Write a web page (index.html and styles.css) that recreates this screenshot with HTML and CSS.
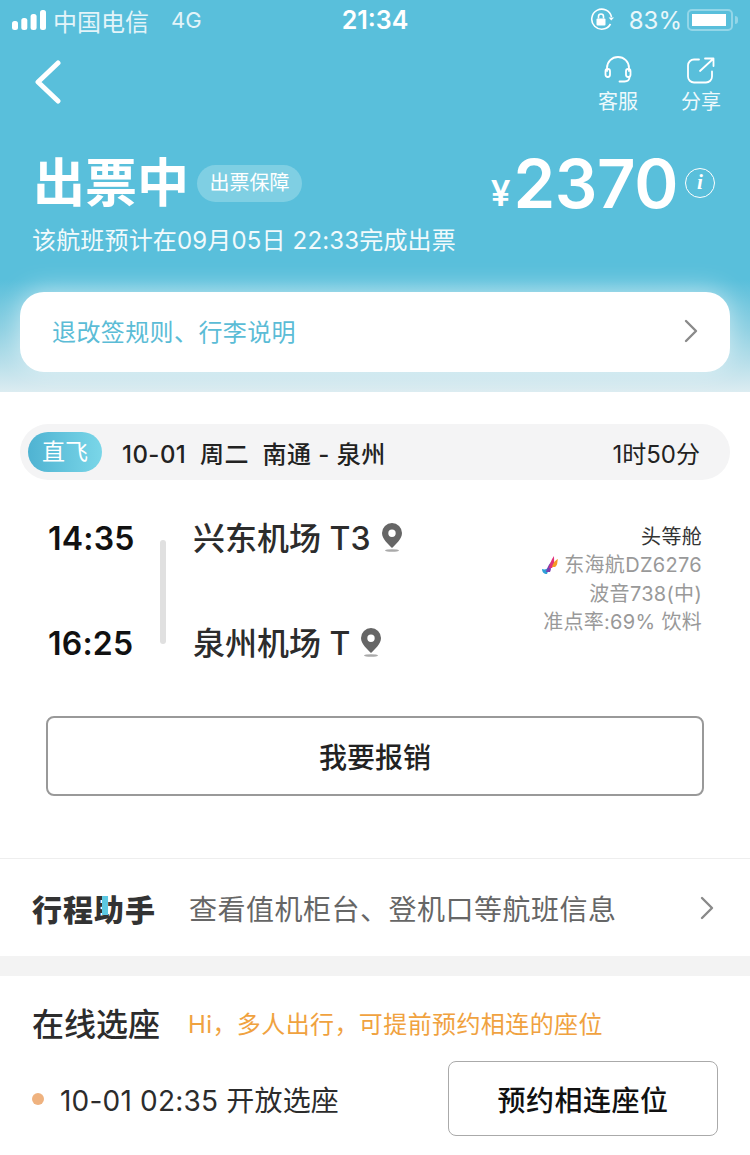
FILE: index.html
```html
<!DOCTYPE html>
<html lang="zh">
<head>
<meta charset="utf-8">
<title>出票中</title>
<link rel="stylesheet" href="styles.css">
</head>
<body>
<div class="page">
  <header class="hero">
    <div class="status">
      <div class="status-side">
        <svg class="signal" width="34" height="20" viewBox="0 0 34 20"><rect x="0" y="11" width="6" height="9" rx="2.5"/><rect x="9.300" y="8" width="6" height="12" rx="2.500"/><rect x="18.600" y="4" width="6" height="16" rx="2.500"/><rect x="28" y="0" width="6" height="20" rx="2.500"/></svg>
        <span class="carrier">中国电信</span><span class="net">4G</span>
      </div>
      <div class="clock">21:34</div>
      <div class="status-side status-right">
        <svg width="24" height="24" viewBox="0 0 24 24" fill="none" stroke="#fff" stroke-width="1.600"><path d="M20.500 16A10 10 0 1 1 21.500 9"/><path d="M18.600 9.400h5.400l-2.700 3z" fill="#fff" stroke="none"/><rect x="6.500" y="10.500" width="9" height="7" rx="1" fill="#fff" stroke="none"/><path d="M8.500 10.500V8.500a2.500 2.500 0 0 1 5 0v2"/></svg>
        <span class="pct">83%</span>
        <div class="battery"><div class="battery-fill"></div></div>
        <div class="battery-tip"></div>
      </div>
    </div>
    <div class="nav">
      <svg class="back" width="28" height="44" viewBox="0 0 28 44" fill="none" stroke="#fff" stroke-width="5" stroke-linecap="round" stroke-linejoin="round"><path d="M24 3 4 22l20 19"/></svg>
      <div class="actions">
        <div class="action">
          <svg width="30" height="30" viewBox="0 0 30 30" fill="none" stroke="#fff" stroke-width="1.800" stroke-linecap="round"><path d="M4 15v-3a11 11 0 0 1 22 0v3"/><rect x="2.500" y="13" width="4.500" height="8" rx="2.200"/><rect x="23" y="13" width="4.500" height="8" rx="2.200"/><path d="M26.500 21c0 3-2 4.500-5 4.500h-5"/></svg>
          <span>客服</span>
        </div>
        <div class="action">
          <svg width="30" height="30" viewBox="0 0 30 30" fill="none" stroke="#fff" stroke-width="1.800" stroke-linecap="round" stroke-linejoin="round"><path d="M13 3.500H8A6 6 0 0 0 2 9.500v11a6 6 0 0 0 6 6h12a6 6 0 0 0 6-6v-5"/><path d="M14 15 27 3M19 2.500h8.500V10"/></svg>
          <span>分享</span>
        </div>
      </div>
    </div>
    <div class="summary">
      <div class="summary-left">
        <div class="title-row"><h1>出票中</h1><span class="guarantee">出票保障</span></div>
        <p class="eta">该航班预计在09月05日 22:33完成出票</p>
      </div>
      <div class="price">
        <span class="yen">¥</span><span class="amount">2370</span>
        <span class="info">i</span>
      </div>
    </div>
    <div class="rules">
      <span class="rules-text">退改签规则、行李说明</span>
      <svg width="14" height="24" viewBox="0 0 14 24" fill="none" stroke="#8a8a8a" stroke-width="2.400" stroke-linecap="round" stroke-linejoin="round"><path d="m2 2 10 10L2 22"/></svg>
    </div>
  </header>

  <section class="flight">
    <div class="route-bar">
      <span class="direct">直飞</span>
      <span class="route">10-01&nbsp; 周二&nbsp; 南通 - 泉州</span>
      <span class="duration">1时50分</span>
    </div>
    <div class="legs">
      <div class="times"><span>14:35</span><span>16:25</span></div>
      <div class="line"></div>
      <div class="airports">
        <div class="airport"><span>兴东机场 T3</span>
          <svg width="22" height="30" viewBox="0 0 22 30"><path fill-rule="evenodd" fill="#666" d="M11 1a10 10 0 0 1 10 10c0 6-6 11-10 15C7 22 1 17 1 11A10 10 0 0 1 11 1Zm0 6.500a3.700 3.700 0 1 0 0 7.400 3.700 3.700 0 0 0 0-7.400Z"/><ellipse cx="11" cy="28.500" rx="7" ry="1.300" fill="#aaa"/></svg>
        </div>
        <div class="airport"><span>泉州机场 T</span>
          <svg width="22" height="30" viewBox="0 0 22 30"><path fill-rule="evenodd" fill="#666" d="M11 1a10 10 0 0 1 10 10c0 6-6 11-10 15C7 22 1 17 1 11A10 10 0 0 1 11 1Zm0 6.500a3.700 3.700 0 1 0 0 7.400 3.700 3.700 0 0 0 0-7.400Z"/><ellipse cx="11" cy="28.500" rx="7" ry="1.300" fill="#aaa"/></svg>
        </div>
      </div>
      <div class="details">
        <span class="cabin">头等舱</span>
        <span class="airline">
          <svg width="18" height="20" viewBox="0 0 18 20"><path d="M1 14c3 1 5 0 7-2-1 3-1 5-2 7-3 0-5-2-5-5Z" fill="#2f9fd8"/><path d="M5 17c1-3 2-7 5-10-1 4 1 7-1 10Z" fill="#7a3fb0"/><path d="M8 13c1-4 2-8 5-12 0 4 1 9-2 12Z" fill="#e0327a"/><path d="M11 12c1-3 2-6 6-8-1 3 0 6-3 8Z" fill="#f59a23"/></svg>
          <span>东海航DZ6276</span>
        </span>
        <span>波音738(中)</span>
        <span>准点率:69% 饮料</span>
      </div>
    </div>
    <button class="expense">我要报销</button>
  </section>

  <section class="assistant">
    <div class="logo">行程<span class="logo-i">助</span>手</div>
    <span class="assistant-text">查看值机柜台、登机口等航班信息</span>
    <svg width="14" height="24" viewBox="0 0 14 24" fill="none" stroke="#8a8a8a" stroke-width="2.400" stroke-linecap="round" stroke-linejoin="round"><path d="m2 2 10 10L2 22"/></svg>
  </section>

  <section class="seats">
    <div class="seats-head"><h2>在线选座</h2><span class="hint">Hi，多人出行，可提前预约相连的座位</span></div>
    <div class="seats-row">
      <div class="open"><i class="dot"></i><span>10-01 02:35 开放选座</span></div>
      <button class="reserve">预约相连座位</button>
    </div>
  </section>
</div>
</body>
</html>
```
FILE: styles.css
```css
* { box-sizing: border-box; }
html, body { margin: 0; padding: 0; background: #fff; }
body { font-family: Inter, "Noto Sans CJK SC", sans-serif; color: #222; }
.page { width: 750px; height: 1155px; overflow: hidden; }
h1, h2, p { margin: 0; font-weight: normal; }

.hero { height: 392px; padding: 0 20px; color: #fff;
  background: linear-gradient(180deg, #59bfdb 0, #59bfdb 280px, #8ed0e2 330px, #dcecf1 392px); }

.status { height: 40px; margin: 0 -8px; display: flex; align-items: center; justify-content: space-between; font-size: 24px; }
.status-side { width: 300px; display: flex; align-items: center; }
.status-right { justify-content: flex-end; }
.signal { fill: #fff; margin-right: 7px; }
.carrier { color: #e3f4f9; }
.net { margin-left: 22px; color: #e3f4f9; font-size: 22px; }
.clock { font-weight: 600; font-size: 25px; }
.pct { margin: 0 0 0 15px; font-size: 24px; color: #eaf7fa; }
.battery { width: 46px; height: 22px; margin-left: 5px; padding: 3px; border: 2px solid #93d6e8; border-radius: 5px; }
.battery-fill { width: 34px; height: 100%; background: #fff; }
.battery-tip { width: 3px; height: 8px; background: #93d6e8; border-radius: 0 3px 3px 0; margin-left: 2px; }

.nav { display: flex; justify-content: space-between; margin-top: 16px; height: 70px; }
.back { margin: 4px 0 0 14px; }
.actions { display: flex; gap: 23px; margin-right: -1px; }
.action { display: flex; flex-direction: column; align-items: center; font-size: 20px; line-height: 28px; color: #eef9fc; width: 60px; }
.action svg { margin-bottom: 2px; }

.summary { display: flex; justify-content: space-between; margin-top: 22px; }
.summary-left { padding-left: 13px; }
.title-row { display: flex; align-items: center; height: 72px; }
h1 { font-size: 52px; font-weight: bold; line-height: 72px; }
.guarantee { margin: -2px 0 0 8px; height: 37px; line-height: 37px; padding: 0 12.500px; border-radius: 19px; background: #7fcfe3; font-size: 20px; }
.eta { font-size: 24px; line-height: 34px; margin: 4px 0 0 -1px; letter-spacing: .16px; color: #f1fafc; }
.price { display: flex; align-items: center; height: 66px; margin: 2px 15px 0 0; }
.yen { font-size: 35px; font-weight: 600; margin-top: 20px; margin-right: 3px; }
.amount { font-size: 67px; font-weight: 600; letter-spacing: -.4px; }
.info { width: 30px; height: 30px; margin-left: 7px; border: 1.500px solid #fff; border-radius: 50%; text-align: center; font: italic bold 21px/27px "Liberation Serif", serif; }

.rules { height: 80px; margin-top: 34px; padding: 0 32px; display: flex; align-items: center; justify-content: space-between; background: #fff; border-radius: 24px; color: #5bbcd6; font-size: 24px; letter-spacing: .4px; box-shadow: 0 -2px 26px rgba(255,255,255,.55); }
.rules-text { padding-bottom: 3px; }
.rules svg { margin-bottom: 2px; }

.flight { padding: 32px 20px 0; height: 467px; border-bottom: 1px solid #eeeeee; }
.route-bar { height: 56px; padding: 0 30px 0 8px; display: flex; align-items: center; background: #f4f4f5; border-radius: 28px; font-size: 24px; }
.direct { width: 74px; height: 40px; line-height: 40px; text-align: center; border-radius: 20px; color: #fff; font-size: 23px; background: linear-gradient(90deg, #4fb3d2, #7ad6e8); }
.route { margin-left: 20px; flex: 1; font-weight: 500; letter-spacing: .45px; color: #222; }
.duration { color: #222; }

.legs { display: flex; margin-top: 30px; height: 172px; padding-left: 28px; position: relative; }
.times { width: 112px; display: flex; flex-direction: column; justify-content: space-between; height: 154px; padding-top: 9px; font-size: 32px; font-weight: 600; line-height: 40px; letter-spacing: .2px; color: #111; }
.line { width: 6px; height: 104px; margin-top: 30px; border-radius: 3px; background: #e0e0e0; }
.airports { margin-left: 27px; height: 154px; padding-top: 9px; display: flex; flex-direction: column; justify-content: space-between; font-size: 32px; line-height: 40px; flex: 1; }
.airport { display: flex; align-items: center; white-space: nowrap; color: #2c2c2c; font-weight: 500; }
.airport svg { margin: 0 0 4px 10px; }
.details { display: flex; flex-direction: column; align-items: flex-end; padding: 13px 28px 0 0; font-size: 20px; line-height: 28.300px; letter-spacing: .3px; color: #999; width: 260px; }
.cabin { color: #333; }
.airline { display: flex; align-items: center; gap: 5px; }

.expense { display: block; width: 658px; height: 80px; margin: 34px 0 0 26px; background: #fff; border: 2px solid #999; border-radius: 8px; font: 500 28px Inter, "Noto Sans CJK SC", sans-serif; color: #222; }

.assistant { height: 117px; padding: 0 36px 0 32px; display: flex; align-items: center; border-bottom: 20px solid #f3f3f3; }
.logo { width: 156px; font-size: 30px; font-weight: 900; color: #333; letter-spacing: 1px; white-space: nowrap; }
.logo-i { position: relative; display: inline-block; }
.logo-i::after { content: ""; position: absolute; left: 8px; top: 10px; width: 6px; height: 19px; background: #5cc8e2; }
.assistant-text { flex: 1; padding-left: 1px; font-size: 28px; letter-spacing: .5px; color: #666; }

.seats { padding: 21px 32px 0; }
.seats-head { display: flex; align-items: center; height: 50px; }
h2 { font-size: 32px; font-weight: 500; color: #2c2c2c; }
.hint { margin-left: 28px; font-size: 24px; letter-spacing: .4px; color: #f0a23f; }
.seats-row { display: flex; align-items: center; justify-content: space-between; margin-top: 14px; }
.open { display: flex; align-items: center; font-size: 28px; letter-spacing: .2px; color: #2c2c2c; }
.dot { width: 12px; height: 12px; border-radius: 50%; background: #efb27f; margin-right: 16px; }
.reserve { width: 270px; height: 75px; background: #fff; border: 1.500px solid #aaa; border-radius: 8px; font: 500 28px Inter, "Noto Sans CJK SC", sans-serif; letter-spacing: .5px; color: #111; }
```
